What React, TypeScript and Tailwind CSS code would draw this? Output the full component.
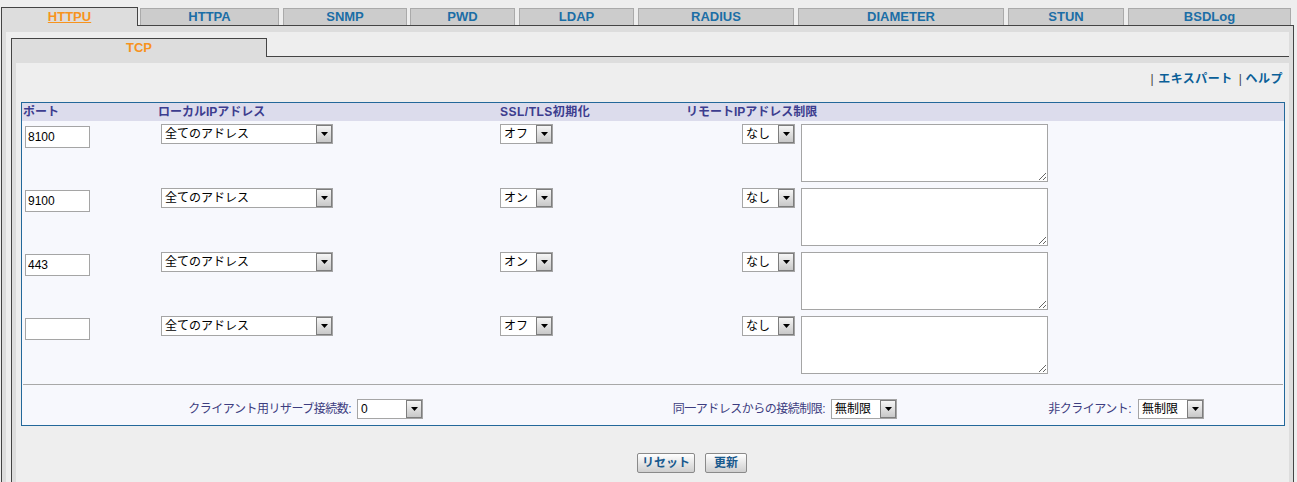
import React from "react";

const tabs = [
  { label: "HTTPA", cls: "ml-[2px] w-[139px]" },
  { label: "SNMP", cls: "ml-[4px] w-[124px]" },
  { label: "PWD", cls: "ml-[3px] w-[105px]" },
  { label: "LDAP", cls: "ml-[4px] w-[115px]" },
  { label: "RADIUS", cls: "ml-[4px] w-[156px]" },
  { label: "DIAMETER", cls: "ml-[4px] w-[206px]" },
  { label: "STUN", cls: "ml-[4px] w-[116px]" },
  { label: "BSDLog", cls: "ml-[4px] w-[163px]" },
];

const rows = [
  { port: "8100", ssl: "オフ" },
  { port: "9100", ssl: "オン" },
  { port: "443", ssl: "オン" },
  { port: "", ssl: "オフ" },
];

const Arrow = () => (
  <span className="flex h-full w-[16px] shrink-0 items-center justify-center border border-[#7d7d7d] bg-gradient-to-b from-[#f6f6f6] to-[#c8c8c8]">
    <svg width="7" height="4" viewBox="0 0 7 4" aria-hidden="true">
      <polygon points="0,0 7,0 3.5,4" fill="#000" />
    </svg>
  </span>
);

interface SelectProps {
  value: string;
  className: string;
}

const FakeSelect: React.FC<SelectProps> = ({ value, className }) => (
  <div className={`flex h-[20px] shrink-0 border border-[#a5a5a5] bg-white ${className}`}>
    <span className="flex-1 overflow-hidden whitespace-nowrap pl-[3px] text-[12px] leading-[18px] text-black">
      {value}
    </span>
    <Arrow />
  </div>
);

export default function App() {
  return (
    <div className="min-h-screen bg-[#eeeeee] pl-px pt-[7px] font-['Liberation_Sans','Noto_Sans_CJK_JP',sans-serif]">
      {/* main tabs */}
      <div className="relative z-10 -mb-px flex h-[19px] items-end">
        <div className="flex h-[19px] w-[137px] items-center justify-center border border-b-0 border-[#444] bg-[#dddddd] text-[13px] font-bold text-[#f7931e] underline">
          HTTPU
        </div>
        {tabs.map((t) => (
          <div
            key={t.label}
            className={`mb-px flex h-[17px] items-center justify-center border border-b-0 border-[#aaaaaa] bg-[#cccccc] text-[13px] font-bold text-[#1b6ea6] ${t.cls}`}
          >
            {t.label}
          </div>
        ))}
      </div>

      <div className="w-[1293px] border border-[#444] bg-[#dddddd] px-[4px] pt-[6px]">
        <div className="bg-[#eeeeee] pl-[5px] pt-[6px]">
          {/* sub tab */}
          <div className="relative z-10 -mb-px flex h-[19px] items-end">
            <div className="flex h-[19px] w-[256px] items-center justify-center border border-b-0 border-[#444] bg-[#dddddd] text-[13px] font-bold text-[#f7931e]">
              TCP
            </div>
          </div>

          <div className="border border-r-0 border-b-0 border-[#444] bg-[#dddddd] pl-[4px] pt-[6px]">
            <div className="bg-[#eeeeee] pb-[20px] pl-[5px] pr-[4px]">
              <div className="h-[39px] pr-[2px] pt-[9px] text-right text-[12px] font-bold leading-[14px] tracking-[0.5px] text-[#0a5f98]">
                <span className="mr-[4px] font-normal text-[#444]">|</span>エキスパート
                <span className="ml-[6px] mr-[3px] font-normal text-[#444]">|</span>ヘルプ
              </div>

              <div className="border border-[#23689a] bg-[#f7f8fd]">
                <div className="flex h-[18px] items-center bg-[#dcdcec] text-[12px] font-bold text-[#3d3d8f]">
                  <div className="w-[136px] pl-px">ポート</div>
                  <div className="w-[342px]">ローカルIPアドレス</div>
                  <div className="w-[186px] tracking-[0.5px]">SSL/TLS初期化</div>
                  <div>リモートIPアドレス制限</div>
                </div>

                <div className="pt-[3px]">
                  {rows.map((r, i) => (
                    <div key={i} className="flex h-[64px] items-start">
                      <div className="w-[136px] pl-[3px]">
                        <input
                          defaultValue={r.port}
                          className="h-[22px] w-[65px] border border-[#a5a5a5] bg-white px-[2px] text-[12px] text-black outline-none"
                        />
                      </div>
                      <div className="w-[342px] pl-[3px]">
                        <FakeSelect value="全てのアドレス" className="w-[172px]" />
                      </div>
                      <div className="w-[186px]">
                        <FakeSelect value={r.ssl} className="w-[53px]" />
                      </div>
                      <div className="flex pl-[56px]">
                        <FakeSelect value="なし" className="w-[53px]" />
                        <textarea
                          defaultValue=""
                          className="ml-[6px] h-[58px] w-[247px] border border-[#a5a5a5] bg-white outline-none"
                        />
                      </div>
                    </div>
                  ))}
                </div>

                <div className="mx-px mt-[4px] h-px bg-[#a8a8a8]" />

                <div className="flex pb-[6px] pt-[14px] text-[12px] tracking-[-0.5px] text-[#3d3d80]">
                  <div className="flex w-[404px] items-center justify-end pr-[3px]">
                    <span className="mr-[6px]">クライアント用リザーブ接続数:</span>
                    <FakeSelect value="0" className="w-[66px] tracking-normal" />
                  </div>
                  <div className="flex w-[473px] items-center justify-end pr-[2px]">
                    <span className="mr-[6px]">同一アドレスからの接続制限:</span>
                    <FakeSelect value="無制限" className="w-[66px] tracking-normal" />
                  </div>
                  <div className="flex w-[307px] items-center justify-end pr-[2px]">
                    <span className="mr-[7px]">非クライアント:</span>
                    <FakeSelect value="無制限" className="w-[66px] tracking-normal" />
                  </div>
                </div>
              </div>

              <div className="mt-[27px] flex gap-[10px] pl-[616px]">
                <button className="h-[20px] w-[58px] rounded-[2px] border border-[#8a8a8a] bg-gradient-to-b from-white to-[#cfcfcf] text-[12px] font-bold leading-[18px] text-[#1a5a8e]">
                  リセット
                </button>
                <button className="h-[20px] w-[42px] rounded-[2px] border border-[#8a8a8a] bg-gradient-to-b from-white to-[#cfcfcf] text-[12px] font-bold leading-[18px] text-[#1a5a8e]">
                  更新
                </button>
              </div>
            </div>
          </div>
        </div>
      </div>
    </div>
  );
}
